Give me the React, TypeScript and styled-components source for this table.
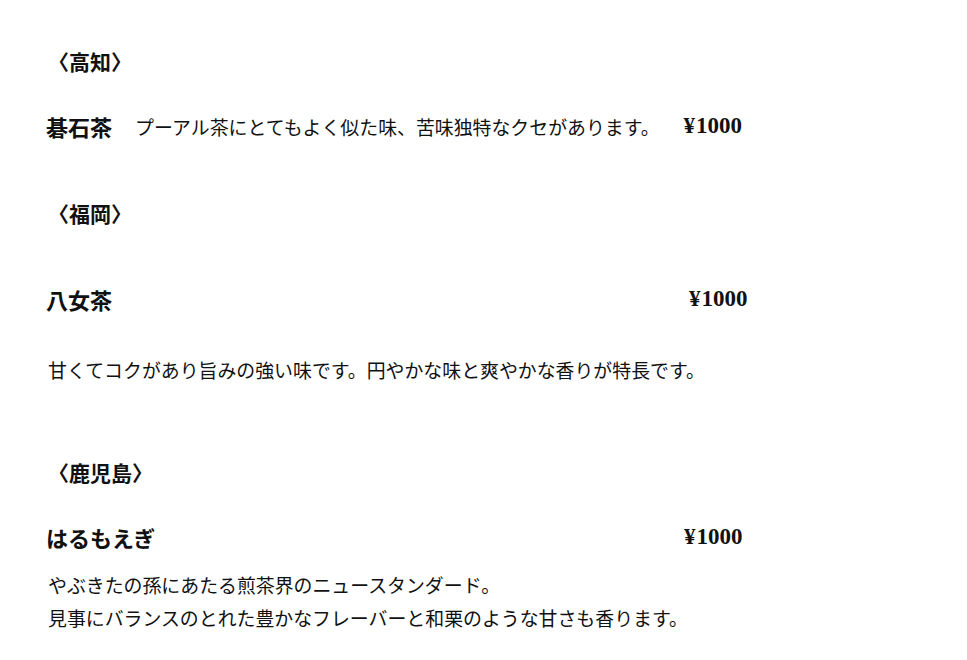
import styled, { createGlobalStyle } from "styled-components";

const GlobalStyle = createGlobalStyle`
  body {
    margin: 0;
    background: #ffffff;
    color: #111111;
    font-family: "Liberation Serif", "Noto Sans CJK JP", serif;
  }
`;

const Page = styled.div`
  padding: 46px 0 0 48px;
  display: flex;
  flex-direction: column;
  align-items: flex-start;
`;

const Region = styled.h2<{ $gap: number }>`
  margin: ${(p) => p.$gap}px 0 0 0;
  font-family: "Noto Sans CJK JP", sans-serif;
  font-size: 21px;
  font-weight: 700;
  line-height: 30px;
`;

const Row = styled.div<{ $gap: number }>`
  margin-top: ${(p) => p.$gap}px;
  display: flex;
  align-items: center;
  height: 32px;
`;

const Name = styled.span<{ $w?: number }>`
  font-family: "Noto Sans CJK JP", sans-serif;
  font-size: 22px;
  font-weight: 700;
  margin-left: -2px;
  width: ${(p) => (p.$w ? `${p.$w}px` : "auto")};
`;

const Note = styled.span`
  font-family: "Noto Sans CJK JP", sans-serif;
  font-size: 18.9px;
  margin-left: 23px;
`;

const Price = styled.span<{ $gap: number }>`
  font-family: "Liberation Serif", serif;
  font-size: 23px;
  font-weight: 700;
  margin-left: ${(p) => p.$gap}px;
`;

const Yen = styled.span`
  margin-right: 1px;
`;

const Text = styled.p<{ $gap: number }>`
  margin: ${(p) => p.$gap}px 0 0 0;
  font-family: "Noto Sans CJK JP", sans-serif;
  font-size: 18.9px;
  line-height: 33px;
`;

export default function App() {
  return (
    <>
      <GlobalStyle />
      <Page>
        <Region $gap={0}>〈高知〉</Region>
        <Row $gap={34}>
          <Name>碁石茶</Name>
          <Note>プーアル茶にとてもよく似た味、苦味独特なクセがあります。</Note>
          <Price $gap={24}>
            <Yen>¥</Yen>1000
          </Price>
        </Row>

        <Region $gap={56}>〈福岡〉</Region>
        <Row $gap={55}>
          <Name $w={643}>八女茶</Name>
          <Price $gap={0}>
            <Yen>¥</Yen>1000
          </Price>
        </Row>
        <Text $gap={38}>
          甘くてコクがあり旨みの強い味です。円やかな味と爽やかな香りが特長です。
        </Text>

        <Region $gap={71}>〈鹿児島〉</Region>
        <Row $gap={34}>
          <Name $w={638}>はるもえぎ</Name>
          <Price $gap={0}>
            <Yen>¥</Yen>1000
          </Price>
        </Row>
        <Text $gap={15}>
          やぶきたの孫にあたる煎茶界のニュースタンダード。
          <br />
          見事にバランスのとれた豊かなフレーバーと和栗のような甘さも香ります。
        </Text>
      </Page>
    </>
  );
}
